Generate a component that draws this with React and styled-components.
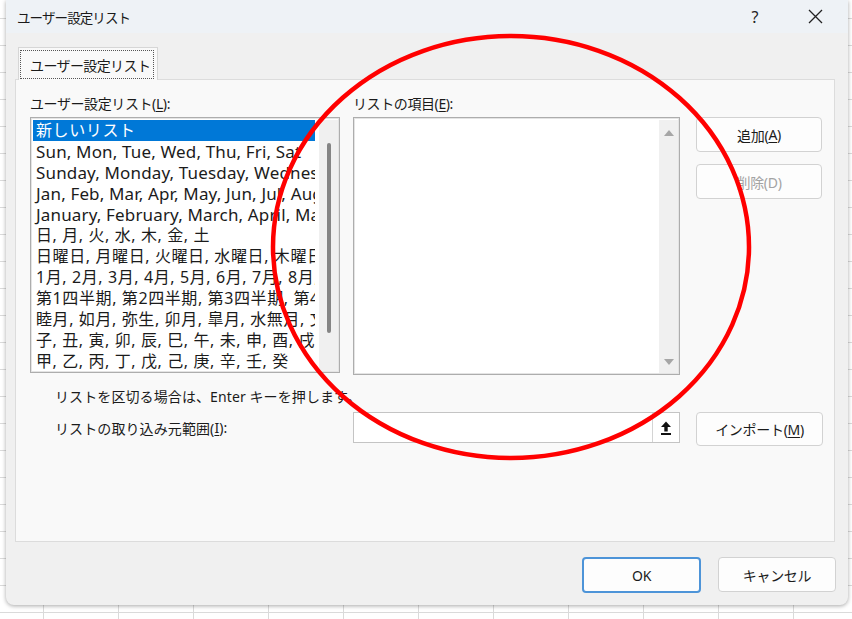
import React from 'react'
import styled, { createGlobalStyle } from 'styled-components'

const GlobalStyle = createGlobalStyle`
  html, body {
    margin: 0;
    padding: 0;
    background: #fff;
  }
  body {
    font-family: "Noto Sans", "Noto Sans CJK JP", sans-serif;
    color: #1b1b1b;
  }
`

const Desk = styled.div`
  position: relative;
  width: 852px;
  height: 619px;
  overflow: hidden;
  padding-left: 6px;
  box-sizing: border-box;
  background-color: #fff;
  background-image:
    linear-gradient(to right, #dadada 1px, transparent 1px),
    linear-gradient(to bottom, #dadada 1px, transparent 1px);
  background-size: 75px 27px;
  background-position: 43px 18px;
`

const Dialog = styled.div`
  width: 842px;
  height: 605px;
  background: #f0f0f0;
  border-radius: 0 0 8px 8px;
  box-shadow: 0 1px 4px rgba(0, 0, 0, 0.35);
  display: flex;
  flex-direction: column;
  overflow: hidden;
`

const TitleBar = styled.div`
  height: 33px;
  flex: none;
  background: #eef2f6;
  display: flex;
  align-items: center;
  padding-left: 11px;
  padding-right: 3px;
`

const Title = styled.div`
  flex: 1;
  font-size: 13.5px;
  letter-spacing: -0.9px;
  color: #1a1a1a;
`

const CaptionButton = styled.div`
  width: 60px;
  height: 33px;
  display: flex;
  align-items: center;
  justify-content: center;
  font-size: 16px;
  color: #222;
`

const Body = styled.div`
  flex: none;
  padding: 14px 13px 0 9px;
  display: flex;
  flex-direction: column;
`

const TabStrip = styled.div`
  display: flex;
  padding-left: 3px;
  height: 32px;
`

const Tab = styled.div`
  width: 140px;
  height: 33px;
  box-sizing: border-box;
  background: #f9f9f9;
  border: 1px solid #d6d6d6;
  border-bottom: none;
  padding: 2px 3px 2px 1px;
  position: relative;
  z-index: 1;
`

const FocusRing = styled.div`
  height: 27px;
  border: 1px dotted #555;
  display: flex;
  align-items: center;
  padding-left: 9px;
  font-size: 14px;
  letter-spacing: -0.6px;
`

const Panel = styled.div`
  height: 463px;
  box-sizing: border-box;
  background: #f9f9f9;
  border: 1px solid #dcdcdc;
  padding: 14px 0 0 14px;
`

const TopRow = styled.div`
  display: flex;
  align-items: flex-start;
`

const Column = styled.div`
  width: ${p => p.$w}px;
  margin-left: ${p => p.$gap || 0}px;
  display: flex;
  flex-direction: column;
`

const Label = styled.div`
  font-size: 14px;
  line-height: 20px;
  height: 20px;
  letter-spacing: -0.4px;
  white-space: nowrap;
  margin-bottom: 3px;
  u {
    text-decoration: underline;
    text-underline-offset: 2px;
  }
`

const ListBox = styled.div`
  height: ${p => p.$h}px;
  box-sizing: border-box;
  background: #fff;
  border: 1px solid #adadad;
  box-shadow: inset 0 0 0 1px #e4e4e4;
  padding: 2px 1px 1px 2px;
  display: flex;
`

const Rows = styled.div`
  flex: 1;
  overflow: hidden;
  margin-right: 4px;
`

const Row = styled.div`
  height: 21px;
  line-height: 21px;
  font-size: ${p => (p.$cjk ? 16 : 17)}px;
  padding-left: 3px;
  white-space: nowrap;
  overflow: hidden;
  background: ${p => (p.$selected ? '#0078d7' : 'transparent')};
  color: ${p => (p.$selected ? '#fff' : '#1b1b1b')};
  letter-spacing: ${p => (p.$cjk ? '0.6px' : '0.15px')};
`

const ScrollTrack = styled.div`
  width: 19px;
  flex: none;
  background: #f0f0f0;
  display: flex;
  flex-direction: column;
  align-items: center;
  justify-content: ${p => (p.$arrows ? 'space-between' : 'flex-start')};
  padding: ${p => (p.$arrows ? '10px 0 8px' : '23px 0 0')};
  box-sizing: border-box;
`

const Thumb = styled.div`
  width: 4px;
  height: 190px;
  border-radius: 2px;
  background: #858585;
`

const Arrow = styled.div`
  width: 0;
  height: 0;
  border-left: 5px solid transparent;
  border-right: 5px solid transparent;
  ${p =>
    p.$down
      ? 'border-top: 6px solid #a6a6a6;'
      : 'border-bottom: 6px solid #a6a6a6;'}
`

const Button = styled.div`
  width: ${p => p.$w || 126}px;
  height: ${p => p.$h || 35}px;
  box-sizing: border-box;
  margin-top: ${p => p.$mt || 0}px;
  background: #fdfdfd;
  border: ${p => (p.$primary ? '2px solid #4d94d8' : '1px solid #d2d2d2')};
  border-radius: 4px;
  display: flex;
  align-items: center;
  justify-content: center;
  font-size: 14px;
  letter-spacing: -0.3px;
  color: ${p => (p.$disabled ? '#a3a3a3' : '#1b1b1b')};
  u {
    text-decoration: underline;
    text-underline-offset: 2px;
  }
`

const Hint = styled.div`
  margin-top: 12px;
  padding-left: 25px;
  font-size: 14px;
  line-height: 20px;
  letter-spacing: 0.1px;
  white-space: nowrap;
`

const ImportRow = styled.div`
  margin-top: 5px;
  display: flex;
  align-items: flex-start;
`

const ImportLabel = styled.div`
  width: 298px;
  padding-left: 25px;
  height: 31px;
  display: flex;
  align-items: center;
  font-size: 14px;
  letter-spacing: 0.1px;
  white-space: nowrap;
  u {
    text-decoration: underline;
    text-underline-offset: 2px;
  }
`

const RangeInput = styled.div`
  width: 327px;
  height: 31px;
  box-sizing: border-box;
  background: #fff;
  border: 1px solid #c4c4c4;
  display: flex;
  justify-content: flex-end;
`

const PickButton = styled.div`
  width: 26px;
  border-left: 1px solid #d4d4d4;
  display: flex;
  align-items: center;
  justify-content: center;
`

const Footer = styled.div`
  flex: 1;
  display: flex;
  justify-content: flex-end;
  align-items: flex-start;
  gap: 17px;
  padding: 15px 12px 0 0;
`

const Annotation = styled.svg`
  position: absolute;
  left: 0;
  top: 0;
  pointer-events: none;
`

const lists = [
  { t: '新しいリスト', cjk: true },
  { t: 'Sun, Mon, Tue, Wed, Thu, Fri, Sat' },
  { t: 'Sunday, Monday, Tuesday, Wednesday, Thursday, Friday, Saturday' },
  { t: 'Jan, Feb, Mar, Apr, May, Jun, Jul, Aug, Sep, Oct, Nov, Dec' },
  { t: 'January, February, March, April, May, June, July, August' },
  { t: '日, 月, 火, 水, 木, 金, 土', cjk: true },
  { t: '日曜日, 月曜日, 火曜日, 水曜日, 木曜日, 金曜日, 土曜日', cjk: true },
  { t: '1月, 2月, 3月, 4月, 5月, 6月, 7月, 8月, 9月, 10月', cjk: true },
  { t: '第1四半期, 第2四半期, 第3四半期, 第4四半期', cjk: true },
  { t: '睦月, 如月, 弥生, 卯月, 皐月, 水無月, 文月, 葉月', cjk: true },
  { t: '子, 丑, 寅, 卯, 辰, 巳, 午, 未, 申, 酉, 戌, 亥', cjk: true },
  { t: '甲, 乙, 丙, 丁, 戊, 己, 庚, 辛, 壬, 癸', cjk: true },
]

function UploadIcon() {
  return (
    <svg width="14" height="16" viewBox="0 0 14 16">
      <polygon points="2,7 7,1.5 12,7" fill="#111" />
      <rect x="5.3" y="6.5" width="3.4" height="5" fill="#111" />
      <rect x="2" y="13" width="10" height="2" fill="#111" />
    </svg>
  )
}

function CloseIcon() {
  return (
    <svg width="15" height="15" viewBox="0 0 15 15">
      <path d="M1 1 L14 14 M14 1 L1 14" stroke="#222" strokeWidth="1.3" />
    </svg>
  )
}

export default function App() {
  return (
    <Desk>
      <GlobalStyle />
      <Dialog>
        <TitleBar>
          <Title>ユーザー設定リスト</Title>
          <CaptionButton>?</CaptionButton>
          <CaptionButton>
            <CloseIcon />
          </CaptionButton>
        </TitleBar>
        <Body>
          <TabStrip>
            <Tab>
              <FocusRing>ユーザー設定リスト</FocusRing>
            </Tab>
          </TabStrip>
          <Panel>
            <TopRow>
              <Column $w={310}>
                <Label>ユーザー設定リスト(<u>L</u>):</Label>
                <ListBox $h={256}>
                  <Rows>
                    {lists.map((l, i) => (
                      <Row key={i} $selected={i === 0} $cjk={l.cjk}>
                        {l.t}
                      </Row>
                    ))}
                  </Rows>
                  <ScrollTrack>
                    <Thumb />
                  </ScrollTrack>
                </ListBox>
              </Column>
              <Column $w={327} $gap={13}>
                <Label>リストの項目(<u>E</u>):</Label>
                <ListBox $h={258}>
                  <Rows />
                  <ScrollTrack $arrows>
                    <Arrow />
                    <Arrow $down />
                  </ScrollTrack>
                </ListBox>
              </Column>
              <Column $w={126} $gap={16}>
                <Button $mt={23}>追加(<u>A</u>)</Button>
                <Button $mt={12} $disabled>削除(D)</Button>
              </Column>
            </TopRow>
            <Hint>リストを区切る場合は、Enter キーを押します。</Hint>
            <ImportRow>
              <ImportLabel>リストの取り込み元範囲(<u>I</u>):</ImportLabel>
              <RangeInput>
                <PickButton>
                  <UploadIcon />
                </PickButton>
              </RangeInput>
              <Column $w={127} $gap={16}>
                <Button $w={127} $h={34}>インポート(<u>M</u>)</Button>
              </Column>
            </ImportRow>
          </Panel>
        </Body>
        <Footer>
          <Button $w={119} $h={36} $primary>OK</Button>
          <Button $w={118} $h={35}>キャンセル</Button>
        </Footer>
      </Dialog>
      <Annotation width="852" height="619">
        <ellipse cx="511" cy="247" rx="238" ry="211" fill="none" stroke="#ff0000" strokeWidth="4.5" />
      </Annotation>
    </Desk>
  )
}
